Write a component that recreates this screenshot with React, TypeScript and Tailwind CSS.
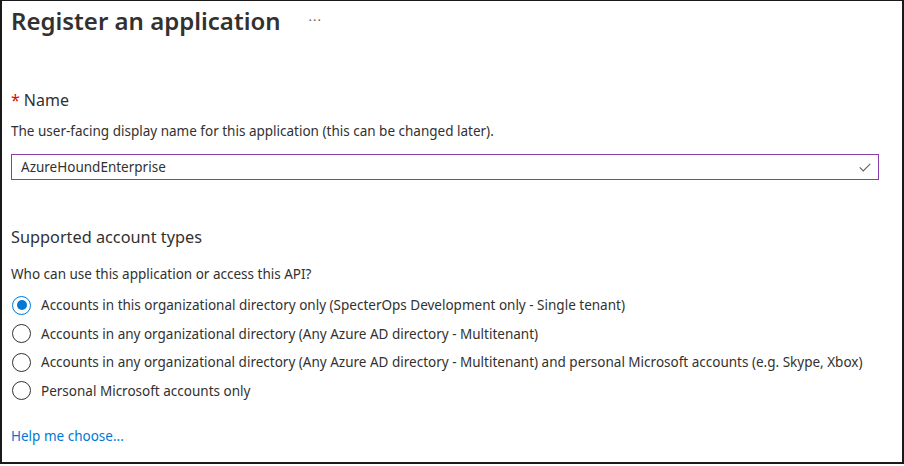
import React from 'react';

const options = [
  'Accounts in this organizational directory only (SpecterOps Development only - Single tenant)',
  'Accounts in any organizational directory (Any Azure AD directory - Multitenant)',
  'Accounts in any organizational directory (Any Azure AD directory - Multitenant) and personal Microsoft accounts (e.g. Skype, Xbox)',
  'Personal Microsoft accounts only',
];

function Radio({ checked }: { checked: boolean }) {
  return (
    <span
      className={`flex h-[19px] w-[19px] shrink-0 items-center justify-center rounded-full border ${
        checked ? 'border-[#0078d4]' : 'border-[#323130]'
      }`}
    >
      {checked && <span className="h-[10px] w-[10px] rounded-full bg-[#0078d4]" />}
    </span>
  );
}

export default function App() {
  return (
    <div className="h-[466px] w-[904px] bg-white">
      <div
        className="h-[464px] w-[904px] border-2 border-t border-[#1a1a1a] pl-[9px] text-[#323130]"
        style={{ fontFamily: '"Segoe UI", "Noto Sans", sans-serif' }}
      >
        <div className="flex items-center gap-[28px] pt-[2px]">
          <h1 className="text-[24px] font-semibold leading-[36px]">Register an application</h1>
          <span className="pb-[8px] text-[13px] tracking-[1px] text-[#605e5c]">...</span>
        </div>

        <div className="mt-[50px] flex items-baseline text-[16px] leading-[22px]">
          <span className="mr-[4px] text-[#e00]">*</span>
          <span>Name</span>
        </div>
        <p className="mt-[11px] text-[13.5px] leading-[18px]">
          The user-facing display name for this application (this can be changed later).
        </p>
        <div className="mt-[14px] flex h-[26px] w-[868px] items-center justify-between border border-[#8d3cad] pl-[9px] pr-[6px] text-[13.5px]">
          <span>AzureHoundEnterprise</span>
          <svg width="14" height="14" viewBox="0 0 16 16" fill="none">
            <path d="M2 8.5l4 4 8-8" stroke="#605e5c" strokeWidth="1.2" />
          </svg>
        </div>

        <h2 className="mt-[46px] text-[16.3px] leading-[22px]">Supported account types</h2>
        <p className="mt-[17px] text-[13.5px] leading-[18px]">
          Who can use this application or access this API?
        </p>
        <div className="mt-[8px] flex flex-col">
          {options.map((o, i) => (
            <label key={i} className="flex h-[28.5px] items-center gap-[10px] pl-[1px] text-[13.5px]">
              <Radio checked={i === 0} />
              <span>{o}</span>
            </label>
          ))}
        </div>
        <a className="mt-[21px] block text-[13.5px] text-[#0078d4]" href="#">
          Help me choose...
        </a>
      </div>
    </div>
  );
}
